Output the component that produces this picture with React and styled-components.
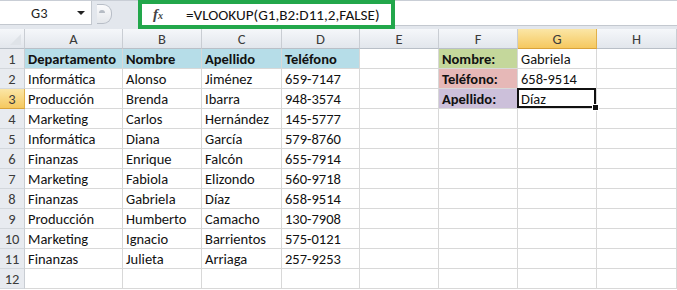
import React from "react";
import styled, { createGlobalStyle, css } from "styled-components";

const GlobalStyle = createGlobalStyle`
  html, body {
    margin: 0;
    padding: 0;
    background: #ffffff;
  }
  body {
    font-family: Carlito, Lato, "Liberation Sans", sans-serif;
    width: 677px;
    height: 290px;
    overflow: hidden;
  }
`;

const Sheet = styled.div`
  display: flex;
  flex-direction: column;
  width: 677px;
  height: 290px;
  overflow: hidden;
`;

const FormulaBar = styled.div`
  display: flex;
  align-items: stretch;
  height: 29px;
  background: #e3e7ed;
  border-top: 1px solid #c9ced6;
  box-sizing: border-box;
`;

const NameBox = styled.div`
  display: flex;
  align-items: center;
  width: 92px;
  height: 24px;
  background: #ffffff;
  border-right: 1px solid #c3c8cf;
  border-bottom: 1px solid #c3c8cf;
  box-sizing: border-box;
  font-size: 14.5px;
  color: #222;
`;

const CellRef = styled.span`
  flex: 1;
  padding-left: 31px;
`;

const Caret = styled.span`
  width: 0;
  height: 0;
  margin-right: 6px;
  border-left: 4px solid transparent;
  border-right: 4px solid transparent;
  border-top: 4px solid #222;
`;

const ButtonZone = styled.div`
  display: flex;
  align-items: flex-start;
  width: 46px;
  padding-top: 3px;
  padding-left: 5px;
  box-sizing: border-box;
`;

const RoundButton = styled.div`
  width: 14px;
  height: 18px;
  border-radius: 0 9px 9px 0;
  border: 1px solid #b8bec7;
  border-left: none;
  background: linear-gradient(#fbfbfc, #e4e7eb);
  position: relative;
  &::after {
    content: "";
    position: absolute;
    top: 5px;
    left: 2px;
    width: 6px;
    height: 3px;
    border-radius: 3px 3px 0 0;
    background: #b6bcc4;
  }
`;

const FormulaField = styled.div`
  flex: 1;
  display: flex;
  align-items: stretch;
  background: #ffffff;
  border-bottom: 1px solid #c3c8cf;
  margin-bottom: 3px;
`;

const Highlight = styled.div`
  display: flex;
  align-items: center;
  width: 257px;
  margin-top: -1px;
  margin-bottom: -4px;
  border: 4px solid #22a74b;
  box-sizing: border-box;
  background: #ffffff;
  font-size: 15.2px;
  color: #111;
  white-space: nowrap;
  overflow: hidden;
`;

const FxMark = styled.span`
  flex-shrink: 0;
  width: 44px;
  padding-left: 11px;
  box-sizing: border-box;
  font-family: "Liberation Serif", "DejaVu Serif", serif;
  font-style: italic;
  font-weight: bold;
  font-size: 15px;
  color: #444;
  sub {
    font-size: 10px;
    vertical-align: baseline;
  }
`;

const Grid = styled.div`
  display: grid;
  grid-template-columns: 25px 98px 79px 80px 78px 79px 79px 79px 80px;
  grid-auto-rows: 20px;
`;

const HeaderCell = styled.div`
  display: flex;
  align-items: center;
  justify-content: center;
  box-sizing: border-box;
  font-size: 14.5px;
  color: #3b3b3b;
  border-right: 1px solid #c9cdd3;
  border-bottom: 1px solid #b9bfc7;
  background: linear-gradient(#f5f7fa, #e2e6ec);
  ${({ $active }) =>
    $active &&
    css`
      background: linear-gradient(#fbe6a6, #f5c85f);
      border-right-color: #e0b04a;
      border-bottom-color: #d9a23a;
    `}
`;

const Corner = styled(HeaderCell)`
  position: relative;
  &::after {
    content: "";
    position: absolute;
    right: 3px;
    bottom: 3px;
    border-left: 11px solid transparent;
    border-bottom: 11px solid #dfe3e8;
  }
`;

const RowHead = styled(HeaderCell)`
  border-bottom: 1px solid #d3d7dc;
  background: #e8ebf0;
  ${({ $active }) =>
    $active &&
    css`
      background: linear-gradient(#fbe6a6, #f5c85f);
      border-bottom-color: #d9a23a;
    `}
`;

const fills = {
  head: "#b6dde8",
  green: "#c4d79b",
  red: "#e6b8b7",
  purple: "#ccc0da",
};

const Cell = styled.div`
  position: relative;
  display: flex;
  align-items: center;
  padding: 1px 0 0 3px;
  box-sizing: border-box;
  font-size: 14.5px;
  color: #111;
  white-space: nowrap;
  border-right: 1px solid #d8d8d8;
  border-bottom: 1px solid #d8d8d8;
  background: ${({ $fill }) => fills[$fill] || "#ffffff"};
  font-weight: ${({ $bold }) => ($bold ? 700 : 400)};
  ${({ $selected }) =>
    $selected &&
    css`
      &::before {
        content: "";
        position: absolute;
        left: -1px;
        top: -1px;
        right: 0;
        bottom: 0;
        border: 2px solid #111;
      }
      &::after {
        content: "";
        position: absolute;
        right: -3px;
        bottom: -3px;
        width: 5px;
        height: 5px;
        background: #111;
        border: 1px solid #fff;
        z-index: 2;
      }
    `}
`;

const columns = ["A", "B", "C", "D", "E", "F", "G", "H"];

const data = [
  ["Informática", "Alonso", "Jiménez", "659-7147"],
  ["Producción", "Brenda", "Ibarra", "948-3574"],
  ["Marketing", "Carlos", "Hernández", "145-5777"],
  ["Informática", "Diana", "García", "579-8760"],
  ["Finanzas", "Enrique", "Falcón", "655-7914"],
  ["Marketing", "Fabiola", "Elizondo", "560-9718"],
  ["Finanzas", "Gabriela", "Díaz", "658-9514"],
  ["Producción", "Humberto", "Camacho", "130-7908"],
  ["Marketing", "Ignacio", "Barrientos", "575-0121"],
  ["Finanzas", "Julieta", "Arriaga", "257-9253"],
];

const lookup = [
  { label: "Nombre:", value: "Gabriela", fill: "green" },
  { label: "Teléfono:", value: "658-9514", fill: "red" },
  { label: "Apellido:", value: "Díaz", fill: "purple" },
];

const App = () => {
  const rows = [];
  for (let r = 1; r <= 12; r++) {
    let main = ["", "", "", ""];
    let bold = false;
    let fill;
    if (r === 1) {
      main = ["Departamento", "Nombre", "Apellido", "Teléfono"];
      bold = true;
      fill = "head";
    } else if (r <= 11) {
      main = data[r - 2];
    }
    const side = lookup[r - 1];
    rows.push(
      <React.Fragment key={r}>
        <RowHead $active={r === 3}>{r}</RowHead>
        {main.map((t, i) => (
          <Cell key={i} $bold={bold} $fill={fill}>
            {t}
          </Cell>
        ))}
        <Cell />
        <Cell $bold $fill={side && side.fill}>
          {side && side.label}
        </Cell>
        <Cell $selected={r === 3}>{side && side.value}</Cell>
        <Cell />
      </React.Fragment>
    );
  }

  return (
    <>
      <GlobalStyle />
      <Sheet>
        <FormulaBar>
          <NameBox>
            <CellRef>G3</CellRef>
            <Caret />
          </NameBox>
          <ButtonZone>
            <RoundButton />
          </ButtonZone>
          <FormulaField>
            <Highlight>
              <FxMark>
                f<sub>x</sub>
              </FxMark>
              =VLOOKUP(G1,B2:D11,2,FALSE)
            </Highlight>
          </FormulaField>
        </FormulaBar>
        <Grid>
          <Corner />
          {columns.map((c) => (
            <HeaderCell key={c} $active={c === "G"}>
              {c}
            </HeaderCell>
          ))}
          {rows}
        </Grid>
      </Sheet>
    </>
  );
};

export default App;
